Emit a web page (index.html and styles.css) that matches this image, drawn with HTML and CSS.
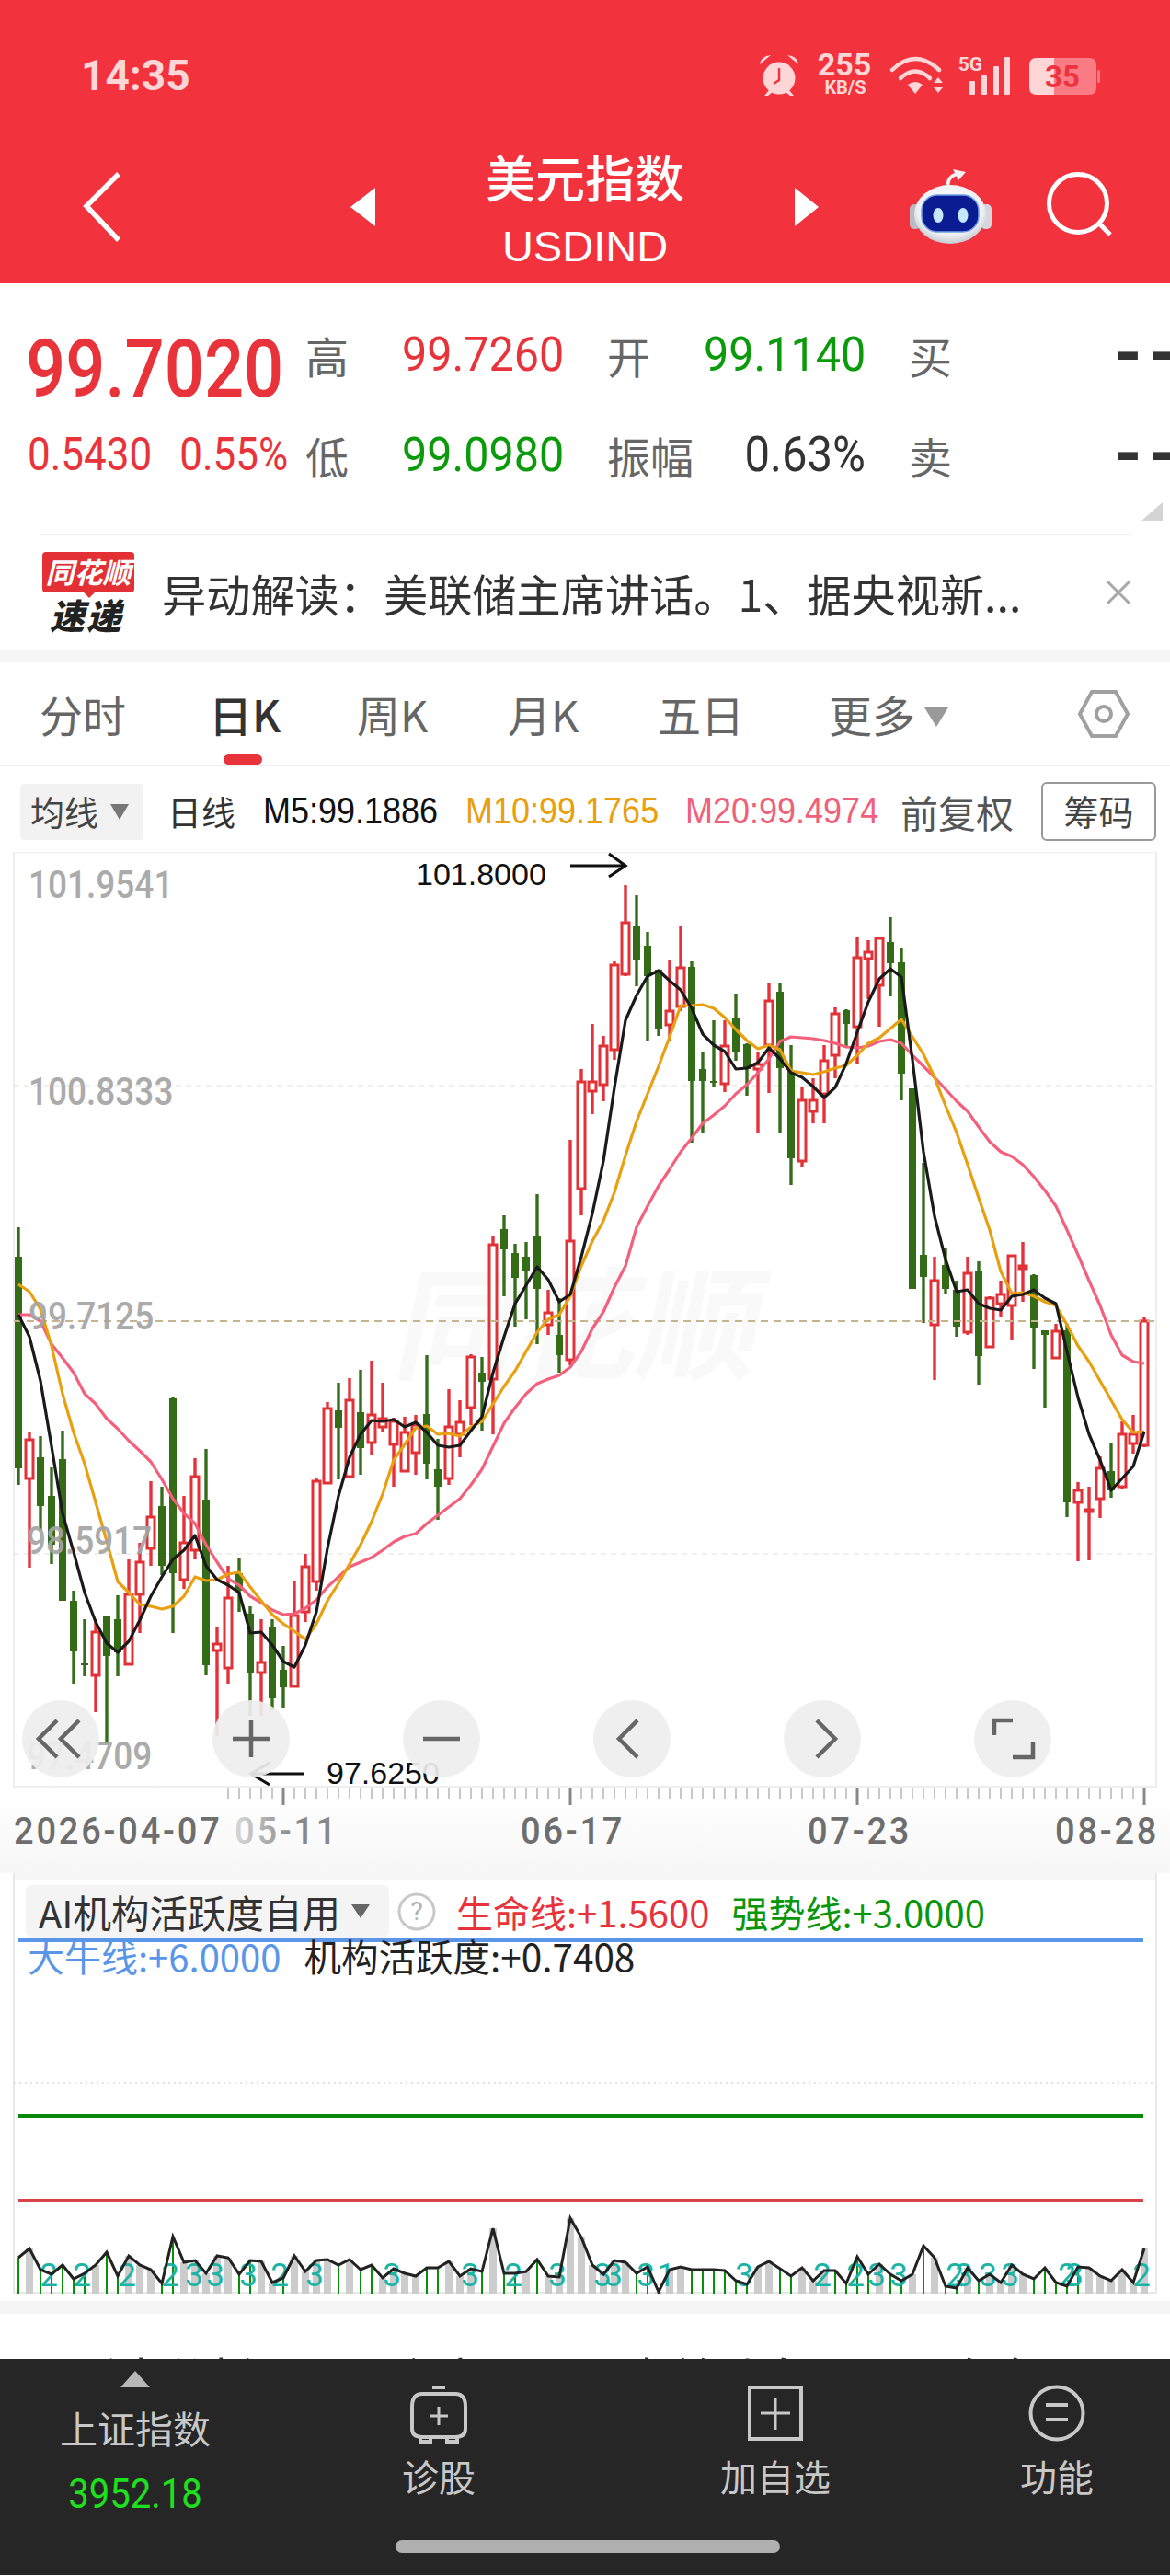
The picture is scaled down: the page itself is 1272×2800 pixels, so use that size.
FILE: index.html
```html
<!DOCTYPE html>
<html lang="zh-CN">
<head>
  <meta charset="UTF-8">
  <meta name="viewport" content="width=device-width, initial-scale=1.0">
  <title>美元指数 USDIND</title>
  <link rel="stylesheet" href="styles.css">
</head>
<body>
  <div class="app">
    <!-- Red header -->
    <div class="header">
      <div class="status-bar">
        <div class="status-time">14:35</div>
        <svg class="status-icons" viewBox="0 0 395 65">
          <g fill="#ffd6d8">
            <circle cx="32" cy="35" r="17.5"/>
            <path d="M11 20 Q12 11 23 10 Z M53 20 Q52 11 41 10 Z"/>
            <path d="M21 48 L16 54 H20 L25 50 Z M43 48 L48 54 H44 L39 50 Z"/>
            <text class="st-speed" x="103" y="32" text-anchor="middle">255</text>
            <text class="st-unit" x="104" y="52" text-anchor="middle">KB/S</text>
            <path d="M172 42 Q180 36 188 42 L180 52 Z"/>
            <path d="M205 34 L210 40 H200 Z M200 45 H210 L205 51 Z"/>
            <text class="st-5g" x="240" y="27" text-anchor="middle">5G</text>
            <rect x="239" y="38" width="6" height="15" rx="1"/>
            <rect x="252" y="32" width="6" height="21" rx="1"/>
            <rect x="265" y="22" width="6" height="31" rx="1"/>
            <rect x="277" y="12" width="6" height="41" rx="1"/>
            <path d="M312 13 H331 V53 H312 Q304 53 304 45 V21 Q304 13 312 13 Z"/>
          </g>
          <path d="M32 24 V37 L26 41" fill="none" stroke="#f2323c" stroke-width="2.4"/>
          <g fill="none" stroke="#ffd6d8" stroke-linecap="round">
            <path d="M155 26 Q180 2 206 26" stroke-width="4.5"/>
            <path d="M164 35 Q180 20 196 35" stroke-width="4.5"/>
          </g>
          <path d="M331 13 H369 Q377 13 377 21 V45 Q377 53 369 53 H331 Z" fill="#fb7c84"/>
          <rect x="378" y="26" width="3" height="14" rx="1.5" fill="#fb7c84"/>
          <text class="st-batt" x="340" y="45" text-anchor="middle">35</text>
        </svg>
      </div>
      <div class="nav-bar">
        <svg class="nav-back" viewBox="0 0 46 80"><path d="M41 4 L6 39 L41 76"/></svg>
        <span class="nav-arrow nav-arrow-left"></span>
        <div class="nav-title">
          <div class="nav-name">美元指数</div>
          <div class="nav-code">USDIND</div>
        </div>
        <span class="nav-arrow nav-arrow-right"></span>
        <svg class="nav-robot" viewBox="0 0 100 90">
          <defs>
            <radialGradient id="headShade" cx="50%" cy="40%" r="65%">
              <stop offset="0%" stop-color="#ffffff"/>
              <stop offset="70%" stop-color="#eef0f3"/>
              <stop offset="100%" stop-color="#b8bbc3"/>
            </radialGradient>
          </defs>
          <path d="M46 24 Q44 12 56 9" fill="none" stroke="#f4f4f4" stroke-width="3.6"/>
          <path d="M51 4 L65 7 L57 16 Z" fill="#f4f4f4"/>
          <rect x="4" y="42" width="12" height="27" rx="5" fill="#b9bcc4"/>
          <rect x="81" y="42" width="12" height="27" rx="5" fill="#d5d7dc"/>
          <ellipse cx="48" cy="53" rx="39" ry="32" fill="url(#headShade)"/>
          <rect x="17" y="32" width="62" height="40" rx="17" fill="#0b1c93" stroke="#6f9ee8" stroke-width="1.5"/>
          <ellipse cx="35" cy="54" rx="5.5" ry="8" fill="#c4e8ff"/>
          <ellipse cx="62" cy="54" rx="5.5" ry="8" fill="#c4e8ff"/>
        </svg>
        <svg class="nav-search" viewBox="0 0 80 80"><circle cx="37" cy="36" r="31.5"/><path d="M60 58 L72 70"/></svg>
      </div>
    </div>

    <!-- Quote -->
    <div class="quote">
      <div class="quote-grid">
        <div class="price-now">99.7020</div>
        <div class="quote-label">高</div>
        <div class="quote-value up">99.7260</div>
        <div class="quote-label">开</div>
        <div class="quote-value down">99.1140</div>
        <div></div>
        <div class="quote-label">买</div>
        <div class="quote-dash">--</div>

        <div class="price-change"><span>0.5430</span><span>0.55%</span></div>
        <div class="quote-label">低</div>
        <div class="quote-value down">99.0980</div>
        <div class="quote-label">振幅</div>
        <div class="quote-value flat">0.63%</div>
        <div></div>
        <div class="quote-label">卖</div>
        <div class="quote-dash">--</div>
      </div>
      <div class="quote-corner"></div>
      <div class="quote-divider"></div>
    </div>

    <!-- News ticker -->
    <div class="news">
      <div class="news-logo">
        <div class="news-logo-top">同花顺</div>
        <div class="news-logo-bottom">速递</div>
      </div>
      <div class="news-text">异动解读：美联储主席讲话。1、据央视新...</div>
      <svg class="news-close" viewBox="0 0 28 26"><path d="M2 1 L26 25 M26 1 L2 25"/></svg>
    </div>
    <div class="section-gap"></div>

    <!-- Period tabs -->
    <div class="tabs">
      <div class="tab">分时</div>
      <div class="tab active">日K</div>
      <div class="tab">周K</div>
      <div class="tab">月K</div>
      <div class="tab">五日</div>
      <div class="tab">更多<span class="tab-caret"></span></div>
      <svg class="tab-setting" viewBox="0 0 56 54">
        <path d="M15 3 H41 L54 27 L41 51 H15 L2 27 Z"/>
        <circle cx="28" cy="27" r="8"/>
      </svg>
    </div>

    <!-- Moving average legend -->
    <div class="ma-row">
      <div class="ma-chip">均线<span class="ma-caret"></span></div>
      <div class="ma-type">日线</div>
      <div class="ma-value ma5">M5:99.1886</div>
      <div class="ma-value ma10">M10:99.1765</div>
      <div class="ma-value ma20">M20:99.4974</div>
      <div class="ma-adjust">前复权</div>
      <div class="ma-button">筹码</div>
    </div>

    <!-- Candle chart -->
    <div class="chart">
      <svg class="chart-svg" viewBox="0 927 1272 1110" width="1272" height="1110">
        <defs>
          <linearGradient id="dateFade" gradientUnits="userSpaceOnUse" x1="255" y1="0" x2="320" y2="0">
            <stop offset="0" stop-color="#d8d8d8"/>
            <stop offset="1" stop-color="#888888"/>
          </linearGradient>
        </defs>
        <rect class="plot-frame" x="15" y="927" width="1242" height="1016"/>
        <text class="watermark" transform="translate(425 1490) skewX(-12)">同花顺</text>
        <path class="grid-line" d="M15 1181 H1257 M15 1690 H1257"/>
        <g id="candles"></g>
        <path class="grid-line-now" d="M15 1437 H1257"/>
        <polyline id="ma20Line" class="ma-line line-pink"/>
        <polyline id="ma10Line" class="ma-line line-orange"/>
        <polyline id="ma5Line" class="ma-line line-black"/>
        <text class="axis-price" x="31" y="978">101.9541</text>
        <text class="axis-price" x="31" y="1203">100.8333</text>
        <text class="axis-price" x="31" y="1447">99.7125</text>
        <text class="axis-price" x="29" y="1691">98.5917</text>
        <text class="axis-price" x="29" y="1925">97.4709</text>
        <text class="peak-label" x="452" y="963">101.8000</text>
        <path class="peak-arrow" d="M620 942 H679 M662 929 L680 942 L662 954"/>
        <text class="peak-label" x="355" y="1940">97.6250</text>
        <path class="peak-arrow" d="M331 1929 H274 M293 1917 L273 1929 L293 1941"/>
        <g id="ticks"></g>
        <text class="axis-date" x="15" y="2006">2026-04-07</text>
        <text class="axis-date date-fade" x="255" y="2006">05-11</text>
        <text class="axis-date" x="566" y="2006">06-17</text>
        <text class="axis-date" x="878" y="2006">07-23</text>
        <text class="axis-date" x="1147" y="2006">08-28</text>
      </svg>
      <div class="chart-tools">
        <div class="tool"><svg viewBox="0 0 60 60"><path d="M26 10 L6 30 L26 50 M50 10 L30 30 L50 50"/></svg></div>
        <div class="tool"><svg viewBox="0 0 60 60"><path d="M30 10 V50 M10 30 H50"/></svg></div>
        <div class="tool"><svg viewBox="0 0 60 60"><path d="M10 30 H50"/></svg></div>
        <div class="tool"><svg viewBox="0 0 60 60"><path d="M36 10 L16 30 L36 50"/></svg></div>
        <div class="tool"><svg viewBox="0 0 60 60"><path d="M24 10 L44 30 L24 50"/></svg></div>
        <div class="tool"><svg viewBox="0 0 60 60"><path d="M30 10 H10 V26 M30 50 H52 V34"/></svg></div>
      </div>
    </div>

    <!-- AI indicator panel -->
    <div class="sub-panel">
      <svg class="sub-svg" viewBox="0 2037 1272 465" width="1272" height="465">
        <rect class="sub-top" x="15" y="2037" width="1242" height="7"/>
        <path class="sub-frame" d="M15 2037 V2493 H1257 V2037"/>
        <path class="sub-dots" d="M15 2265 H1257"/>
        <rect class="sub-line" x="20" y="2108" width="1223" height="4" fill="#5a96e8"/>
        <rect class="sub-line" x="20" y="2299" width="1223" height="4" fill="#0a8a0a"/>
        <rect class="sub-line" x="20" y="2391" width="1223" height="4" fill="#d8434a"/>
        <g id="subBars"></g>
        <g id="subDigits"></g>
        <polyline id="subLine" class="sub-value-line"/>
      </svg>
      <div class="sub-legend">
        <div class="sub-row-first">
          <div class="sub-chip">AI机构活跃度自用<span class="sub-caret"></span></div>
          <svg class="sub-help" viewBox="0 0 42 42"><circle cx="21" cy="21" r="19"/><text x="21" y="30" text-anchor="middle">?</text></svg>
          <span class="sub-red">生命线:+1.5600</span>
          <span class="sub-green">强势线:+3.0000</span>
        </div>
        <div class="sub-row-second">
          <span class="sub-blue">大牛线:+6.0000</span>
          <span class="sub-dark">机构活跃度:+0.7408</span>
        </div>
      </div>
    </div>
    <div class="section-gap section-gap-low"></div>

    <!-- Tabs of the next section, mostly hidden under the bottom bar -->
    <div class="peek">
      <span>形态分析</span><span>主力</span><span>大单动向</span><span>资金</span>
    </div>

    <!-- Bottom bar -->
    <div class="bottom-bar">
      <div class="bar-index">
        <span class="bar-index-up"></span>
        <div class="bar-index-name">上证指数</div>
        <div class="bar-index-value">3952.18</div>
      </div>
      <div class="bar-item">
        <svg viewBox="0 0 68 64">
          <path d="M27 3 H41 M5 24 Q5 10 16 10 H52 Q63 10 63 24 V48 Q63 57 52 57 H16 Q5 57 5 48 Z M14 57 V62 H25 V57 M43 57 V62 H54 V57"/>
          <path d="M34 24 V44 M24 34 H44" class="bar-thin"/>
        </svg>
        <div>诊股</div>
      </div>
      <div class="bar-item">
        <svg viewBox="0 0 68 64">
          <rect x="6" y="3" width="56" height="56"/>
          <path d="M34 14 V49 M18 31 H50" class="bar-thin"/>
        </svg>
        <div>加自选</div>
      </div>
      <div class="bar-item">
        <svg viewBox="0 0 68 64">
          <circle cx="34" cy="31" r="28.5"/>
          <path d="M22 22 H46 M22 38 H46"/>
        </svg>
        <div>功能</div>
      </div>
      <div class="home-pill"></div>
    </div>
  </div>

  <script src="script.js"></script>
</body>
</html>
```

FILE: styles.css
```css
body {
  margin: 0;
  background-color: #ffffff;
  font-family: "Noto Sans CJK SC", sans-serif;
  color: #333333;
}
.app {
  position: relative;
  width: 1272px;
  height: 2800px;
  overflow: hidden;
}
.header {
  height: 308px;
  background-color: #f2323c;
  color: #ffffff;
}
.status-bar {
  display: flex;
  justify-content: space-between;
  align-items: center;
  height: 160px;
  padding: 4px 62px 0 88px;
  box-sizing: border-box;
}
.status-time {
  font-family: Roboto, sans-serif;
  font-size: 46px;
  font-weight: 700;
  color: #ffd6d8;
}
.status-icons {
  width: 395px;
  height: 65px;
}
.st-speed {
  font-family: Roboto, sans-serif;
  font-size: 34px;
  font-weight: 700;
}
.st-unit {
  font-family: Roboto, sans-serif;
  font-size: 20px;
  font-weight: 700;
}
.st-5g {
  font-family: Roboto, sans-serif;
  font-size: 21px;
  font-weight: 700;
}
.st-batt {
  font-family: Roboto, sans-serif;
  font-size: 33px;
  font-weight: 700;
  fill: #ee3340;
}
.nav-bar {
  display: flex;
  align-items: center;
  height: 148px;
  padding: 0 0 18px 88px;
  box-sizing: border-box;
}
.nav-back {
  width: 46px;
  height: 80px;
  fill: none;
  stroke: #ffffff;
  stroke-width: 5.5;
}
.nav-arrow {
  width: 0;
  height: 0;
  border-top: 21px solid transparent;
  border-bottom: 21px solid transparent;
}
.nav-arrow-left {
  margin-left: 247px;
  border-right: 27px solid #ffffff;
}
.nav-arrow-right {
  border-left: 26px solid #ffffff;
}
.nav-title {
  align-self: flex-start;
  width: 456px;
  text-align: center;
}
.nav-name {
  font-size: 54px;
  font-weight: 500;
  line-height: 64px;
}
.nav-code {
  margin-top: 6px;
  font-family: "Liberation Sans", sans-serif;
  font-size: 47px;
  line-height: 76px;
}
.nav-robot {
  width: 100px;
  height: 90px;
  margin-left: 95px;
}
.nav-search {
  width: 80px;
  height: 80px;
  margin-left: 50px;
  fill: none;
  stroke: #ffffff;
  stroke-width: 5;
}

.quote {
  position: relative;
  height: 274px;
  padding-top: 45px;
  box-sizing: border-box;
}
.quote-grid {
  display: grid;
  grid-template-columns: 304px 105px 223px 105px 176px 47px 223px 60px;
  grid-template-rows: 64px 64px;
  row-gap: 45px;
  align-items: center;
  padding-left: 28px;
  width: 1272px;
  box-sizing: border-box;
}
.price-now {
  justify-self: start;
  margin-top: 32px;
  font-family: Roboto, sans-serif;
  font-size: 76px;
  font-weight: 500;
  line-height: 64px;
  color: #e8333b;
  white-space: nowrap;
  transform: scaleY(1.15);
}
.price-change {
  display: flex;
  gap: 30px;
  margin-left: 2px;
  font-family: Roboto, sans-serif;
  font-size: 44px;
  color: #e8333b;
}
.price-change span {
  transform: scaleY(1.12);
}
.quote-label {
  font-size: 47px;
  color: #666666;
  white-space: nowrap;
}
.quote-value {
  justify-self: start;
  font-family: Roboto, sans-serif;
  font-size: 48.5px;
  white-space: nowrap;
  transform: scaleY(1.08);
}
.quote-value.flat {
  justify-self: end;
  font-size: 49px;
}
.up {
  color: #e8333b;
}
.down {
  color: #0a9a0a;
}
.flat {
  color: #333333;
}
.quote-dash {
  font-family: Roboto, sans-serif;
  font-size: 78px;
  font-weight: 700;
  line-height: 64px;
  letter-spacing: 7px;
  color: #333333;
  white-space: nowrap;
}
.quote-corner {
  position: absolute;
  left: 1241px;
  top: 238px;
  width: 23px;
  height: 20px;
  background-color: #d4d4d4;
  clip-path: polygon(100% 0, 100% 100%, 0 100%);
}
.quote-divider {
  margin: 54px 43px 0;
  border-bottom: 2px solid #eeeeee;
}

.news {
  display: flex;
  align-items: center;
  height: 124px;
  padding: 0 42px;
  box-sizing: border-box;
}
.news-logo {
  flex: none;
  width: 104px;
  text-align: center;
}
.news-logo-top {
  position: relative;
  height: 44px;
  margin-left: 4px;
  border-radius: 4px;
  background-color: #e23034;
  font-size: 31px;
  font-weight: 700;
  font-style: italic;
  line-height: 42px;
  color: #ffffff;
  white-space: nowrap;
}
.news-logo-top::after {
  content: "";
  position: absolute;
  left: 44px;
  bottom: -6px;
  border-top: 7px solid #e23034;
  border-left: 7px solid transparent;
  border-right: 7px solid transparent;
}
.news-logo-bottom {
  margin-top: 4px;
  font-size: 38px;
  font-weight: 900;
  font-style: italic;
  line-height: 40px;
  letter-spacing: 2px;
  color: #222222;
}
.news-text {
  flex: 1;
  margin-left: 30px;
  font-size: 48.2px;
  color: #333333;
  white-space: nowrap;
}
.news-close {
  flex: none;
  width: 28px;
  height: 26px;
  fill: none;
  stroke: #a8a8a8;
  stroke-width: 3;
}
.section-gap {
  height: 14px;
  background-color: #f5f5f5;
}

.tabs {
  display: grid;
  grid-template-columns: 184px 161px 164px 163px 186px 271px auto;
  align-items: center;
  height: 113px;
  padding-left: 43px;
  box-sizing: border-box;
  border-bottom: 2px solid #eeeeee;
}
.tab {
  position: relative;
  font-size: 47px;
  line-height: 111px;
  color: #666666;
}
.tab.active {
  color: #333333;
  font-weight: 500;
}
.tab.active::after {
  content: "";
  position: absolute;
  left: 16px;
  bottom: 0;
  width: 42px;
  height: 11px;
  border-radius: 6px;
  background-color: #e8333b;
}
.tab-caret {
  display: inline-block;
  margin-left: 10px;
  vertical-align: 6px;
  border-top: 21px solid #999999;
  border-left: 13px solid transparent;
  border-right: 13px solid transparent;
}
.tab-setting {
  width: 56px;
  height: 54px;
  fill: none;
  stroke: #a0a0a0;
  stroke-width: 4;
}

.ma-row {
  display: flex;
  align-items: center;
  gap: 29px;
  height: 93px;
  padding: 5px 0 0 22px;
  box-sizing: border-box;
}
.ma-chip {
  display: flex;
  align-items: center;
  width: 134px;
  height: 61px;
  padding-left: 11px;
  box-sizing: border-box;
  border-radius: 4px;
  background-color: #f2f2f2;
  font-size: 37px;
  color: #444444;
}
.ma-caret {
  margin-left: 13px;
  border-top: 17px solid #777777;
  border-left: 10px solid transparent;
  border-right: 10px solid transparent;
}
.ma-type {
  width: 75px;
  margin-left: -3px;
  font-size: 37px;
  color: #333333;
  white-space: nowrap;
}
.ma-value {
  font-family: "Liberation Sans", sans-serif;
  font-size: 36px;
  white-space: nowrap;
  transform: scaleY(1.12);
}
.ma5 {
  width: 191px;
  color: #111111;
}
.ma10 {
  width: 211px;
  color: #e8a010;
}
.ma20 {
  width: 212px;
  margin-left: -1px;
  color: #f0607a;
}
.ma-adjust {
  width: 124px;
  margin-left: -7px;
  font-size: 41px;
  color: #555555;
  white-space: nowrap;
}
.ma-button {
  flex: none;
  width: 125px;
  height: 64px;
  box-sizing: border-box;
  border: 2px solid #999999;
  border-radius: 6px;
  font-size: 38px;
  line-height: 58px;
  text-align: center;
  color: #444444;
}

.chart {
  position: relative;
  height: 1110px;
  background: linear-gradient(#ffffff 1020px, #f7f7f7 1110px);
}
.chart-svg {
  display: block;
}
.plot-frame {
  fill: #ffffff;
  stroke: #eeeeee;
  stroke-width: 2;
}
.watermark {
  font-size: 132px;
  font-weight: 700;
  fill: #f9f9f9;
}
.grid-line {
  fill: none;
  stroke: #e0e0e0;
  stroke-width: 1;
  stroke-dasharray: 6 5;
}
.grid-line-now {
  fill: none;
  stroke: #c8b48c;
  stroke-width: 2;
  stroke-dasharray: 8 6;
}
.wick-red {
  stroke: #e5313a;
  stroke-width: 3.4;
}
.wick-green {
  stroke: #356e1a;
  stroke-width: 3.4;
}
.body-red {
  fill: #ffffff;
  stroke: #df3338;
  stroke-width: 3;
}
.body-green {
  fill: #336b17;
}
.ma-line {
  fill: none;
  stroke-width: 3.2;
  stroke-linejoin: round;
}
.line-black {
  stroke: #1a1a1a;
}
.line-orange {
  stroke: #e8a010;
}
.line-pink {
  stroke: #f4607c;
}
.axis-price {
  font-family: Roboto, sans-serif;
  font-size: 37px;
  font-weight: 500;
  fill: #a4a4a4;
  opacity: 0.92;
  transform-box: fill-box;
  transform-origin: 50% 100%;
  transform: scaleY(1.14);
}
.peak-label {
  font-family: "Liberation Sans", sans-serif;
  font-size: 34px;
  fill: #111111;
}
.peak-arrow {
  fill: none;
  stroke: #111111;
  stroke-width: 3.2;
}
.tick-minor {
  stroke: #c8c8c8;
  stroke-width: 2;
}
.tick-major {
  stroke: #888888;
  stroke-width: 3;
}
.axis-date {
  font-family: Roboto, sans-serif;
  font-size: 38px;
  font-weight: 500;
  letter-spacing: 2.8px;
  fill: #6e6e6e;
  transform-box: fill-box;
  transform-origin: 50% 100%;
  transform: scaleY(1.08);
}
.date-fade {
  fill: url(#dateFade);
}
.chart-tools {
  position: absolute;
  left: 24px;
  top: 922px;
  display: flex;
  gap: 123px;
}
.tool {
  display: flex;
  align-items: center;
  justify-content: center;
  width: 84px;
  height: 84px;
  border-radius: 50%;
  background-color: rgba(238, 238, 238, 0.92);
}
.tool svg {
  width: 60px;
  height: 60px;
  fill: none;
  stroke: #666666;
  stroke-width: 4.5;
}

.sub-panel {
  position: relative;
  height: 465px;
}
.sub-svg {
  display: block;
}
.sub-top {
  fill: #f6f6f6;
}
.sub-frame {
  fill: none;
  stroke: #e8e8e8;
  stroke-width: 2;
}
.sub-dots {
  fill: none;
  stroke: #e4e4e4;
  stroke-width: 2;
  stroke-dasharray: 2 4;
}
.bar-grey {
  stroke: #cccccc;
  stroke-width: 8;
}
.bar-green {
  stroke: #0a8f0a;
  stroke-width: 2;
}
.sub-digit {
  font-family: Roboto, sans-serif;
  font-size: 35px;
  fill: #19b4a6;
}
.sub-value-line {
  fill: none;
  stroke: #222222;
  stroke-width: 3;
}
.sub-legend {
  position: absolute;
  left: 0;
  top: 0;
  right: 0;
  font-size: 40px;
  line-height: 50px;
  white-space: nowrap;
}
.sub-row-first {
  display: flex;
  align-items: center;
  height: 57px;
  margin: 13px 0 0 28px;
}
.sub-chip {
  display: flex;
  align-items: center;
  width: 395px;
  height: 57px;
  padding-left: 14px;
  box-sizing: border-box;
  border-radius: 6px;
  background-color: #f4f4f4;
  font-size: 41.5px;
  color: #333333;
}
.sub-caret {
  margin-left: 12px;
  border-top: 15px solid #666666;
  border-left: 10px solid transparent;
  border-right: 10px solid transparent;
}
.sub-help {
  width: 42px;
  height: 42px;
  margin-left: 9px;
  fill: none;
  stroke: #c8c8c8;
  stroke-width: 3;
}
.sub-help text {
  font-family: Roboto, sans-serif;
  font-size: 28px;
  stroke: none;
  fill: #b0b0b0;
}
.sub-red {
  margin-left: 22px;
  color: #e8333b;
}
.sub-green {
  margin-left: 24px;
  color: #0a960a;
}
.sub-row-second {
  display: flex;
  gap: 25px;
  margin: -5px 0 0 30px;
}
.sub-blue {
  color: #5a96e8;
}
.sub-dark {
  font-size: 40.5px;
  color: #222222;
}
.section-gap-low {
  height: 14px;
}

.peek {
  height: 49px;
  padding: 38px 0 0 78px;
  box-sizing: border-box;
  overflow: hidden;
  font-size: 50px;
  line-height: 60px;
  color: #333333;
  white-space: nowrap;
}
.peek span {
  margin-right: 150px;
}

.bottom-bar {
  position: relative;
  display: grid;
  grid-template-columns: 294px 366px 366px 246px;
  height: 235px;
  background-color: #262626;
  color: #c8c8c8;
  text-align: center;
}
.bar-index {
  display: flex;
  flex-direction: column;
  align-items: center;
  padding-top: 13px;
}
.bar-index-up {
  border-bottom: 18px solid #b8b8b8;
  border-left: 16px solid transparent;
  border-right: 16px solid transparent;
}
.bar-index-name {
  margin-top: 14px;
  font-size: 41px;
  line-height: 58px;
}
.bar-index-value {
  margin-top: 15px;
  font-family: Roboto, sans-serif;
  font-size: 40px;
  line-height: 60px;
  color: #1fe01f;
  transform: scaleY(1.1);
}
.bar-item {
  display: flex;
  flex-direction: column;
  align-items: center;
  padding-top: 28px;
  font-size: 40px;
  line-height: 60px;
}
.bar-item svg {
  width: 68px;
  height: 64px;
  margin-bottom: 5px;
  fill: none;
  stroke: #c8c8c8;
  stroke-width: 4;
}
.bar-thin {
  stroke-width: 3;
}
.home-pill {
  position: absolute;
  left: 430px;
  bottom: 24px;
  width: 418px;
  height: 14px;
  border-radius: 7px;
  background-color: #b0b0b0;
}
```

FILE: script.js
```js
const NS = "http://www.w3.org/2000/svg";

// [high, body top, body bottom, low, colour] in page y, one row per trading day
const candles = [
  [1335, 1367, 1597, 1615, "g"], [1558, 1566, 1608, 1705, "r"], [1562, 1585, 1638, 1665, "g"],
  [1596, 1627, 1680, 1701, "g"], [1556, 1587, 1741, 1741, "g"], [1730, 1741, 1796, 1831, "g"],
  [1761, 1809, 1811, 1823, "g"], [1761, 1775, 1822, 1862, "r"], [1758, 1758, 1801, 1896, "g"],
  [1735, 1761, 1797, 1823, "g"], [1696, 1734, 1810, 1810, "r"], [1678, 1699, 1734, 1776, "r"],
  [1611, 1650, 1684, 1703, "r"], [1617, 1638, 1703, 1713, "g"], [1519, 1521, 1711, 1776, "g"],
  [1627, 1678, 1718, 1728, "r"], [1586, 1606, 1686, 1696, "r"], [1576, 1631, 1811, 1822, "g"],
  [1769, 1788, 1795, 1888, "r"], [1703, 1738, 1814, 1831, "r"], [1694, 1711, 1730, 1753, "g"],
  [1747, 1755, 1819, 1866, "g"], [1761, 1808, 1819, 1866, "r"], [1761, 1769, 1847, 1860, "g"],
  [1790, 1816, 1835, 1858, "g"], [1720, 1757, 1834, 1834, "r"], [1690, 1704, 1753, 1764, "r"],
  [1608, 1611, 1720, 1730, "r"], [1525, 1532, 1613, 1613, "r"], [1504, 1534, 1553, 1609, "g"],
  [1499, 1523, 1606, 1606, "r"], [1490, 1536, 1575, 1604, "g"], [1480, 1539, 1569, 1583, "r"],
  [1504, 1543, 1552, 1558, "r"], [1542, 1546, 1571, 1617, "r"], [1541, 1558, 1600, 1600, "r"],
  [1539, 1550, 1580, 1604, "r"], [1474, 1538, 1592, 1609, "g"], [1565, 1598, 1617, 1653, "g"],
  [1511, 1552, 1608, 1615, "r"], [1523, 1547, 1560, 1585, "r"], [1473, 1476, 1531, 1550, "r"],
  [1476, 1493, 1503, 1556, "g"], [1345, 1354, 1500, 1560, "r"], [1322, 1337, 1359, 1410, "g"],
  [1353, 1363, 1390, 1443, "g"], [1351, 1367, 1382, 1435, "g"], [1299, 1344, 1402, 1462, "g"],
  [1403, 1428, 1441, 1452, "r"], [1412, 1452, 1474, 1493, "g"], [1240, 1350, 1479, 1485, "r"],
  [1163, 1177, 1293, 1322, "r"], [1114, 1177, 1187, 1212, "r"], [1127, 1138, 1180, 1198, "r"],
  [1046, 1050, 1142, 1153, "r"], [963, 1004, 1060, 1062, "r"], [974, 1008, 1045, 1073, "g"],
  [1014, 1029, 1062, 1132, "g"], [1055, 1055, 1119, 1127, "g"], [1045, 1100, 1115, 1132, "r"],
  [1008, 1053, 1095, 1100, "r"], [1046, 1052, 1176, 1243, "g"], [1145, 1163, 1176, 1233, "g"],
  [1110, 1176, 1178, 1183, "g"], [1110, 1138, 1179, 1188, "r"], [1081, 1107, 1144, 1154, "g"],
  [1135, 1136, 1163, 1192, "g"], [1144, 1158, 1163, 1233, "r"], [1069, 1089, 1137, 1189, "r"],
  [1070, 1079, 1162, 1232, "g"], [1137, 1165, 1260, 1289, "g"], [1182, 1197, 1263, 1270, "r"],
  [1173, 1197, 1209, 1222, "r"], [1137, 1154, 1190, 1222, "r"], [1096, 1103, 1148, 1173, "r"],
  [1098, 1099, 1114, 1140, "g"], [1020, 1042, 1117, 1157, "r"], [1023, 1036, 1043, 1087, "r"],
  [1020, 1021, 1072, 1117, "r"], [998, 1025, 1048, 1084, "g"], [1031, 1047, 1168, 1197, "g"],
  [1184, 1184, 1402, 1402, "g"], [1265, 1365, 1389, 1439, "g"], [1367, 1393, 1441, 1501, "r"],
  [1357, 1376, 1402, 1408, "g"], [1393, 1403, 1443, 1454, "g"], [1367, 1385, 1449, 1452, "r"],
  [1372, 1383, 1475, 1506, "g"], [1410, 1412, 1465, 1465, "r"], [1393, 1408, 1418, 1432, "r"],
  [1365, 1366, 1420, 1457, "r"], [1351, 1377, 1380, 1416, "r"], [1386, 1387, 1445, 1489, "g"],
  [1447, 1447, 1452, 1531, "g"], [1440, 1448, 1477, 1478, "r"], [1440, 1447, 1634, 1650, "g"],
  [1612, 1621, 1634, 1698, "r"], [1617, 1642, 1644, 1697, "r"], [1584, 1597, 1630, 1651, "r"],
  [1570, 1600, 1621, 1629, "g"], [1546, 1560, 1617, 1620, "r"], [1539, 1560, 1570, 1581, "r"],
  [1432, 1437, 1572, 1574, "r"]
];

const ma5 = [1430, 1454, 1502, 1573, 1646, 1688, 1732, 1764, 1787, 1797, 1785, 1762, 1736, 1715, 1696, 1686, 1670, 1703, 1718, 1724,
  1732, 1776, 1775, 1789, 1807, 1813, 1789, 1753, 1684, 1627, 1585, 1560, 1545, 1546, 1544, 1552, 1547, 1558, 1572, 1574,
  1572, 1556, 1541, 1493, 1454, 1418, 1398, 1378, 1392, 1416, 1408, 1367, 1320, 1263, 1183, 1110, 1083, 1062, 1056, 1067,
  1077, 1097, 1125, 1137, 1144, 1163, 1162, 1156, 1140, 1152, 1167, 1172, 1182, 1194, 1183, 1157, 1123, 1090, 1065, 1054,
  1063, 1153, 1253, 1323, 1370, 1405, 1403, 1418, 1423, 1425, 1410, 1408, 1403, 1412, 1418, 1470, 1520, 1560, 1588, 1621,
  1608, 1595, 1557];

const ma10 = [1397, 1405, 1424, 1464, 1516, 1558, 1592, 1634, 1676, 1720, 1732, 1745, 1747, 1750, 1747, 1736, 1715, 1719, 1718, 1712,
  1710, 1726, 1741, 1756, 1766, 1774, 1783, 1766, 1741, 1722, 1701, 1680, 1655, 1625, 1588, 1571, 1553, 1551, 1560, 1559,
  1562, 1552, 1546, 1527, 1508, 1491, 1470, 1449, 1435, 1430, 1410, 1377, 1350, 1328, 1297, 1257, 1220, 1190, 1160, 1128,
  1094, 1094, 1093, 1097, 1107, 1120, 1132, 1141, 1137, 1142, 1165, 1167, 1169, 1166, 1162, 1159, 1148, 1135, 1129, 1119,
  1109, 1128, 1147, 1172, 1203, 1232, 1267, 1303, 1338, 1383, 1407, 1406, 1410, 1416, 1420, 1441, 1464, 1481, 1502, 1523,
  1544, 1558, 1557];

const ma20 = [1430, 1430, 1437, 1462, 1477, 1493, 1516, 1527, 1543, 1554, 1567, 1578, 1590, 1609, 1630, 1646, 1657, 1680, 1699, 1717,
  1724, 1736, 1743, 1751, 1756, 1755, 1749, 1740, 1726, 1715, 1704, 1699, 1694, 1686, 1677, 1671, 1668, 1657, 1648, 1639,
  1630, 1615, 1598, 1573, 1548, 1531, 1516, 1505, 1500, 1496, 1487, 1470, 1445, 1427, 1400, 1377, 1335, 1312, 1290, 1272,
  1253, 1238, 1222, 1213, 1203, 1190, 1180, 1167, 1152, 1133, 1128, 1129, 1130, 1132, 1135, 1139, 1140, 1138, 1133, 1131,
  1135, 1148, 1160, 1172, 1185, 1198, 1209, 1226, 1242, 1253, 1258, 1267, 1280, 1295, 1312, 1338, 1365, 1393, 1420, 1452,
  1474, 1481, 1483];

const activity = [2455, 2445, 2468, 2473, 2463, 2478, 2472, 2463, 2449, 2475, 2453, 2463, 2468, 2483, 2432, 2460, 2458, 2472, 2453, 2455,
  2473, 2458, 2459, 2482, 2477, 2453, 2470, 2458, 2457, 2463, 2457, 2468, 2463, 2477, 2467, 2472, 2475, 2466, 2466, 2459,
  2475, 2467, 2470, 2423, 2472, 2472, 2470, 2457, 2475, 2476, 2412, 2433, 2463, 2473, 2458, 2460, 2472, 2465, 2492, 2468,
  2465, 2468, 2468, 2468, 2469, 2480, 2484, 2465, 2459, 2467, 2475, 2466, 2480, 2469, 2469, 2483, 2454, 2473, 2462, 2473,
  2480, 2473, 2442, 2455, 2486, 2488, 2466, 2480, 2473, 2482, 2463, 2473, 2478, 2466, 2482, 2486, 2465, 2466, 2475, 2480,
  2468, 2482, 2445];

// days where the activity bar is a thin green stick
const greenSticks = [0, 2, 3, 4, 5, 6, 8, 9, 13, 14, 20, 21, 24, 29, 31, 32, 37, 38, 42, 44, 45, 47, 56, 57, 61, 62, 63, 64, 65, 66,
  69, 70, 74, 75, 76, 77, 79, 80, 82, 84, 85, 87, 92, 93, 94, 95, 96];

const digits = [[53, "2"], [89, "2"], [138, "2"], [185, "2"], [211, "3"], [234, "3"], [270, "3"], [304, "2"], [342, "3"], [426, "3"],
  [511, "3"], [558, "2"], [606, "3"], [655, "3"], [667, "3"], [702, "3"], [724, "1"], [809, "3"], [894, "2"], [930, "2"],
  [953, "3"], [977, "3"], [1038, "2"], [1048, "3"], [1074, "3"], [1098, "3"], [1160, "2"], [1168, "3"], [1241, "2"]];

function dayX(i) {
  return 20 + 12 * i;
}

function add(parent, tag, attrs, text) {
  const el = document.createElementNS(NS, tag);
  Object.keys(attrs).forEach((key) => el.setAttribute(key, attrs[key]));
  if (text) el.textContent = text;
  parent.appendChild(el);
}

function line(parent, x, y1, y2, cls) {
  add(parent, "line", { x1: x, x2: x, y1: y1, y2: y2, class: cls });
}

// Candles
const candleGroup = document.getElementById("candles");
candles.forEach((c, i) => {
  const x = dayX(i);
  const [high, top, bottom, low, colour] = c;
  if (colour === "r") {
    line(candleGroup, x, high, low, "wick-red");
    add(candleGroup, "rect", { x: x - 4, y: top, width: 8, height: Math.max(bottom - top, 1), class: "body-red" });
  } else {
    line(candleGroup, x, high, low, "wick-green");
    add(candleGroup, "rect", { x: x - 4, y: top, width: 8, height: Math.max(bottom - top, 2), class: "body-green" });
  }
});

// Moving average lines
function setLine(id, values) {
  const points = values.map((y, i) => dayX(i) + "," + y).join(" ");
  document.getElementById(id).setAttribute("points", points);
}
setLine("ma5Line", ma5);
setLine("ma10Line", ma10);
setLine("ma20Line", ma20);
setLine("subLine", activity);

const tickGroup = document.getElementById("ticks");
candles.forEach((c, i) => {
  const x = dayX(i);
  if (x < 247) return;
  const major = i === 24 || i === 50 || i === 76 || i === 102;
  line(tickGroup, x, 1945, major ? 1963 : 1956, major ? "tick-major" : "tick-minor");
});

// Activity bars and the numbers over them
const barGroup = document.getElementById("subBars");
activity.forEach((y, i) => {
  const green = greenSticks.includes(i);
  line(barGroup, dayX(i), y, 2495, green ? "bar-green" : "bar-grey");
});
const digitGroup = document.getElementById("subDigits");
digits.forEach((d) => {
  add(digitGroup, "text", { x: d[0], y: 2486, "text-anchor": "middle", class: "sub-digit" }, d[1]);
});
```
